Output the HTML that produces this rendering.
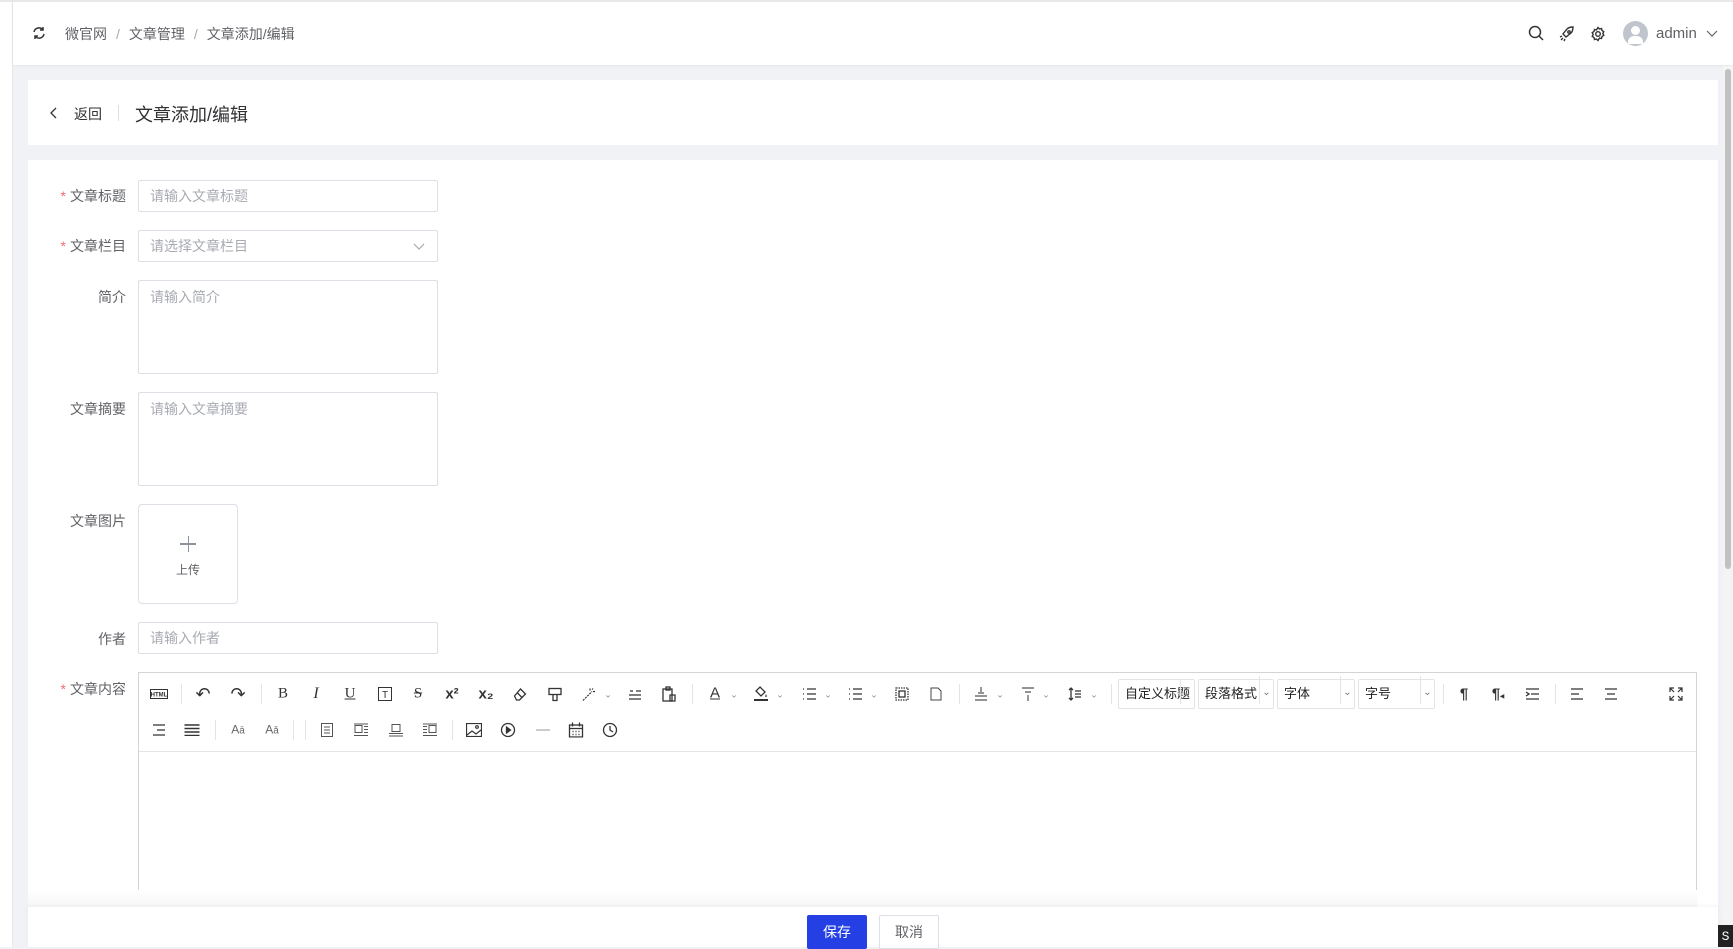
<!DOCTYPE html>
<html><head><meta charset="utf-8"><style>
*{box-sizing:border-box;margin:0;padding:0}
body{width:1733px;height:947px;overflow:hidden;background:#f0f2f5;font-family:"Liberation Sans","Noto Sans CJK SC",sans-serif;color:#303133;position:relative;font-size:14px}
.a{position:absolute}
.hdr{left:13px;top:0;width:1720px;height:65px;background:#fff;border-top:2px solid #e8e8e8;box-shadow:0 1px 3px rgba(0,0,0,.05)}
.lstrip{left:0;top:0;width:13px;height:947px;background:#fff;border-top:2px solid #e8e8e8;border-right:1px solid #e6e6e6}
.card{background:#fff;left:28px;width:1690px}
.lbl{width:100px;text-align:right;font-size:14px;color:#606266;left:26px}
.lbl i{color:#f56c6c;font-style:normal;margin-right:4px}
.inp{left:138px;width:300px;height:32px;border:1px solid #dcdfe6;border-radius:2px;background:#fff;color:#a8abb2;font-size:14px;padding-left:11px;line-height:30px}
.ta{line-height:20px;padding-top:6px}
.ic{transform:translate(-50%,-50%);color:#333;font-size:15px;line-height:1;white-space:nowrap}
.ic svg{display:block}
.car{transform:translate(-50%,-50%);font-size:9px;color:#888}
.sep{width:1px;height:20px;background:#e4e4e4}
.sel{height:30px;top:679px;border:1px solid #e4e4e4;border-radius:2px;font-size:13px;color:#222;line-height:28px;padding-left:6px}
.sel:after{content:"⌄";position:absolute;right:0;top:-4px;width:13px;border-left:1px solid #e4e4e4;height:28px;font-size:10px;text-align:center;color:#777;line-height:34px}
</style></head><body>
<div class="a lstrip"></div>
<div class="a hdr">
 <svg class="a" style="left:19px;top:24px" width="14" height="14" viewBox="0 0 14 14" fill="none" stroke="#333" stroke-width="1.5"><path d="M2 6a5 5 0 0 1 9-2M12 8a5 5 0 0 1-9 2"/><path d="M11 1v3H8M3 13v-3h3"/></svg>
 <div class="a" style="left:52px;top:22px;font-size:14px;color:#606266">微官网<span style="color:#aaa;margin:0 9px">/</span>文章管理<span style="color:#aaa;margin:0 9px">/</span>文章添加/编辑</div>
 <svg class="a" style="left:1515px;top:23px" width="16" height="16" viewBox="0 0 16 16" fill="none" stroke="#333" stroke-width="1.5"><circle cx="7" cy="7" r="5.5"/><path d="M11 11l4 4"/></svg>
 <svg class="a" style="left:1546px;top:24px" width="16" height="16" viewBox="0 0 16 16" fill="none" stroke="#333" stroke-width="1.4"><path d="M6 10l-2-2 4-5c2-2 5-2 6-2 0 1 0 4-2 6l-5 4z"/><circle cx="10" cy="6" r="1.2"/><path d="M4 12l-2 2M6 13l-1 2M3 10l-2 1"/></svg>
 <svg class="a" style="left:1577px;top:24px" width="16" height="16" viewBox="0 0 16 16" fill="none" stroke="#333" stroke-width="1.4"><circle cx="8" cy="8" r="2.3"/><path d="M8 1.5l1.5 1.5 2-.5.5 2 1.8 1.2-1 1.8 1 1.8-1.8 1.2-.5 2-2-.5L8 14.5 6.5 13l-2 .5-.5-2L2.2 10.3l1-1.8-1-1.8L4 5.5l.5-2 2 .5z"/></svg>
 <div class="a" style="left:1610px;top:19px;width:25px;height:25px;border-radius:50%;background:#c0c4cc;overflow:hidden"><div class="a" style="left:8px;top:5px;width:9px;height:9px;border-radius:50%;background:#fff"></div><div class="a" style="left:5px;top:15px;width:15px;height:8px;border-radius:6px 6px 0 0;background:#fff"></div></div>
 <div class="a" style="left:1643px;top:23px;font-size:15px;color:#606266">admin</div>
 <svg class="a" style="left:1693px;top:28px" width="12" height="8" viewBox="0 0 12 8" fill="none" stroke="#666" stroke-width="1.2"><path d="M1 1l5 5 5-5"/></svg>
</div>
<div class="a" style="left:1723px;top:66px;width:10px;height:881px;background:#f4f4f4"></div>
<div class="a" style="left:1725px;top:69px;width:6px;height:500px;background:#c1c1c1;border-radius:3px"></div>

<div class="a card" style="top:80px;height:65px">
 <svg class="a" style="left:22px;top:27px" width="8" height="12" viewBox="0 0 8 12" fill="none" stroke="#333" stroke-width="1.3"><path d="M6 1L1 6l5 5"/></svg>
 <div class="a" style="left:46px;top:24px;font-size:14px;color:#303133">返回</div>
 <div class="a" style="left:90px;top:25px;width:1px;height:16px;background:#dcdfe6"></div>
 <div class="a" style="left:107px;top:21px;font-size:18px;color:#303133">文章添加/编辑</div>
</div>
<div class="a card" style="top:160px;height:787px"></div>

<div class="a lbl" style="top:186px"><i>*</i>文章标题</div>
<div class="a inp" style="top:180px">请输入文章标题</div>
<div class="a lbl" style="top:236px"><i>*</i>文章栏目</div>
<div class="a inp" style="top:230px">请选择文章栏目<svg class="a" style="right:12px;top:12px" width="12" height="7" viewBox="0 0 12 7" fill="none" stroke="#aaa" stroke-width="1.2"><path d="M1 1l5 5 5-5"/></svg></div>
<div class="a lbl" style="top:287px">简介</div>
<div class="a inp ta" style="top:280px;height:94px">请输入简介</div>
<div class="a lbl" style="top:399px">文章摘要</div>
<div class="a inp ta" style="top:392px;height:94px">请输入文章摘要</div>
<div class="a lbl" style="top:511px">文章图片</div>
<div class="a" style="left:138px;top:504px;width:100px;height:100px;border:1px solid #dcdfe6;border-radius:4px;background:#fff">
 <div class="a" style="left:41px;top:38px;width:16px;height:1.5px;background:#8c939d"></div>
 <div class="a" style="left:48.5px;top:31px;width:1.5px;height:16px;background:#8c939d"></div>
 <div class="a" style="left:0;width:98px;top:56px;text-align:center;font-size:12px;color:#606266">上传</div>
</div>
<div class="a lbl" style="top:629px">作者</div>
<div class="a inp" style="top:622px">请输入作者</div>
<div class="a lbl" style="top:679px"><i>*</i>文章内容</div>

<div class="a" style="left:138px;top:672px;width:1559px;height:275px;border:1px solid #d4d4d4;background:#fff"></div>
<div class="a" style="left:139px;top:751px;width:1557px;height:1px;background:#e4e4e4"></div>

<div class="a ic" style="left:159px;top:694px"><svg width="18" height="10"><rect x=".5" y=".5" width="17" height="9" fill="none" stroke="#333"/><text x="9" y="7.5" font-size="6" text-anchor="middle" font-family="Liberation Sans" font-weight="bold" fill="#333">HTML</text></svg></div>
<div class="a sep" style="left:181px;top:684px"></div>
<div class="a ic" style="left:203px;top:694px;font-size:18px">↶</div>
<div class="a ic" style="left:238px;top:694px;font-size:18px">↷</div>
<div class="a sep" style="left:261px;top:684px"></div>
<div class="a ic" style="left:283px;top:694px;font-family:'Liberation Serif'">B</div>
<div class="a ic" style="left:316px;top:694px;font-family:'Liberation Serif';font-style:italic;font-size:16px">I</div>
<div class="a ic" style="left:350px;top:694px;text-decoration:underline;font-family:'Liberation Serif'">U</div>
<div class="a ic" style="left:385px;top:694px"><svg width="14" height="14"><rect x=".5" y=".5" width="13" height="13" fill="none" stroke="#333"/><text x="7" y="11" font-size="10" text-anchor="middle" fill="#333">T</text></svg></div>
<div class="a ic" style="left:418px;top:694px;text-decoration:line-through;font-family:'Liberation Serif'">S</div>
<div class="a ic" style="left:452px;top:694px;font-weight:bold">x²</div>
<div class="a ic" style="left:486px;top:694px;font-weight:bold">x₂</div>
<div class="a ic" style="left:520px;top:694px"><svg width="15" height="14" fill="none" stroke="#333" stroke-width="1.3"><path d="M2 9l6-7 5 5-6 6H4zM5 6l5 5"/></svg></div>
<div class="a ic" style="left:555px;top:694px"><svg width="14" height="15" fill="none" stroke="#333" stroke-width="1.3"><rect x="1" y="2" width="12" height="6"/><path d="M5 8v6h4V8"/></svg></div>
<div class="a ic" style="left:588px;top:694px"><svg width="14" height="15" fill="none" stroke="#333" stroke-width="1.2"><path d="M2 14l9-9M9 2v2M12 5h2M12 2l-1 1" stroke-dasharray="2 1"/></svg></div>
<div class="a car" style="left:608px;top:695px">⌄</div>
<div class="a ic" style="left:635px;top:694px"><svg width="14" height="12" fill="none" stroke="#333" stroke-width="1.3"><path d="M1 7h12M1 11h12M8 3h5M2 3h3"/></svg></div>
<div class="a ic" style="left:669px;top:694px"><svg width="14" height="16" fill="none" stroke="#333" stroke-width="1.3"><rect x="1" y="3" width="9" height="12"/><rect x="4" y="1" width="4" height="3"/><path d="M8 9h5v6H8z"/></svg></div>
<div class="a sep" style="left:692px;top:684px"></div>
<div class="a ic" style="left:715px;top:693px;text-decoration:underline">A</div>
<div class="a car" style="left:734px;top:695px">⌄</div>
<div class="a ic" style="left:761px;top:694px"><svg width="14" height="16" fill="#333"><path d="M6 1l5 5-4 4-5-5z" fill="none" stroke="#333" stroke-width="1.3"/><path d="M12 8c1 2 1 3 0 3s-1-1 0-3z"/><rect x="0" y="13" width="14" height="2"/></svg></div>
<div class="a car" style="left:780px;top:695px">⌄</div>
<div class="a ic" style="left:809px;top:694px"><svg width="14" height="12" fill="none" stroke="#333" stroke-width="1.3"><path d="M5 1h9M5 6h9M5 11h9M1 1h1M1 6h1M1 11h1"/></svg></div>
<div class="a car" style="left:828px;top:695px">⌄</div>
<div class="a ic" style="left:855px;top:694px"><svg width="14" height="12" fill="none" stroke="#333" stroke-width="1.3"><path d="M5 1h9M5 6h9M5 11h9M1 1h1M1 6h1M1 11h1"/></svg></div>
<div class="a car" style="left:874px;top:695px">⌄</div>
<div class="a ic" style="left:902px;top:694px"><svg width="14" height="14" fill="none" stroke="#333" stroke-width="1.3"><rect x="1" y="1" width="12" height="12" stroke-dasharray="1.5 1"/><rect x="4" y="4" width="6" height="6"/></svg></div>
<div class="a ic" style="left:936px;top:694px"><svg width="12" height="14" fill="none" stroke="#444" stroke-width="1"><path d="M1 1h7l3 3v9H1z"/></svg></div>
<div class="a sep" style="left:959px;top:684px"></div>
<div class="a ic" style="left:981px;top:694px"><svg width="14" height="14" fill="none" stroke="#555" stroke-width="1.2"><path d="M7 0v5M1 9h12M1 13h12M4 6h6"/></svg></div>
<div class="a car" style="left:1000px;top:695px">⌄</div>
<div class="a ic" style="left:1028px;top:694px"><svg width="14" height="14" fill="none" stroke="#555" stroke-width="1.2"><path d="M1 1h12M4 5h6M7 8v6"/></svg></div>
<div class="a car" style="left:1046px;top:695px">⌄</div>
<div class="a ic" style="left:1075px;top:694px"><svg width="14" height="14" fill="none" stroke="#333" stroke-width="1.3"><path d="M3 1v12M1 3l2-2 2 2M1 11l2 2 2-2M7 4h6M7 7h6M7 10h6"/></svg></div>
<div class="a car" style="left:1094px;top:695px">⌄</div>
<div class="a sep" style="left:1111px;top:684px"></div>
<div class="a sel" style="left:1118px;width:77px;overflow:hidden">自定义标题</div>
<div class="a sel" style="left:1198px;width:76px">段落格式</div>
<div class="a sel" style="left:1277px;width:78px">字体</div>
<div class="a sel" style="left:1358px;width:77px">字号</div>
<div class="a sep" style="left:1443px;top:684px"></div>
<div class="a ic" style="left:1464px;top:694px;font-weight:bold">¶</div>
<div class="a ic" style="left:1498px;top:694px;font-weight:bold">¶<span style="font-size:8px">◂</span></div>
<div class="a ic" style="left:1532px;top:694px"><svg width="14" height="12" fill="none" stroke="#333" stroke-width="1.3"><path d="M1 1h13M6 6h8M1 11h13M1 4l3 2-3 2"/></svg></div>
<div class="a sep" style="left:1555px;top:684px"></div>
<div class="a ic" style="left:1577px;top:694px"><svg width="14" height="12" fill="none" stroke="#333" stroke-width="1.3"><path d="M1 1h12M1 6h8M1 11h12"/></svg></div>
<div class="a ic" style="left:1611px;top:694px"><svg width="14" height="12" fill="none" stroke="#333" stroke-width="1.3"><path d="M1 1h12M3 6h8M1 11h12"/></svg></div>
<div class="a ic" style="left:1676px;top:694px"><svg width="14" height="14" fill="none" stroke="#333" stroke-width="1.2"><path d="M1 5V1h4M9 1h4v4M13 9v4H9M5 13H1V9M1 1l4 4M13 1L9 5M13 13L9 9M1 13l4-4"/></svg></div>

<div class="a ic" style="left:159px;top:730px"><svg width="14" height="12" fill="none" stroke="#333" stroke-width="1.3"><path d="M1 1h12M5 6h8M1 11h12"/></svg></div>
<div class="a ic" style="left:192px;top:730px"><svg width="15" height="12" fill="none" stroke="#333" stroke-width="1.6"><path d="M0 1h15M0 4.5h15M0 8h15M0 11.5h15"/></svg></div>
<div class="a sep" style="left:215px;top:720px"></div>
<div class="a ic" style="left:238px;top:730px;font-size:12px;color:#666">A<span style="font-size:10px">ā</span></div>
<div class="a ic" style="left:272px;top:730px;font-size:12px;color:#666">A<span style="font-size:10px">ǎ</span></div>
<div class="a sep" style="left:293px;top:720px"></div>
<div class="a sep" style="left:305px;top:720px"></div>
<div class="a ic" style="left:327px;top:730px"><svg width="12" height="14" fill="none" stroke="#555" stroke-width="1"><rect x=".5" y=".5" width="11" height="13"/><path d="M3 4h6M3 7h6M3 10h6"/></svg></div>
<div class="a ic" style="left:361px;top:730px"><svg width="14" height="13" fill="none" stroke="#555" stroke-width="1"><rect x="1" y="2" width="7" height="7"/><path d="M10 3h4M10 6h4M10 9h4M0 12h14M0 .5h14"/></svg></div>
<div class="a ic" style="left:396px;top:730px"><svg width="14" height="13" fill="none" stroke="#555" stroke-width="1"><rect x="3" y="1" width="8" height="7"/><path d="M0 10h14M0 12.5h14"/></svg></div>
<div class="a ic" style="left:430px;top:730px"><svg width="14" height="13" fill="none" stroke="#555" stroke-width="1"><rect x="6" y="2" width="7" height="7"/><path d="M0 3h4M0 6h4M0 9h4M0 12h14M0 .5h14"/></svg></div>
<div class="a sep" style="left:452px;top:720px"></div>
<div class="a ic" style="left:474px;top:730px"><svg width="16" height="14" fill="none" stroke="#333" stroke-width="1.2"><rect x=".5" y=".5" width="15" height="13"/><path d="M1 12l5-4 4 3 5-4"/><circle cx="11" cy="4" r="1.3"/></svg></div>
<div class="a ic" style="left:508px;top:730px"><svg width="15" height="15" fill="none" stroke="#333" stroke-width="1.3"><circle cx="7.5" cy="7.5" r="6.5"/><path d="M6 4.5l4 3-4 3z" fill="#333"/></svg></div>
<div class="a" style="left:536px;top:729px;width:14px;height:2px;background:#ccc"></div>
<div class="a ic" style="left:576px;top:730px"><svg width="15" height="15" fill="none" stroke="#333" stroke-width="1.3"><rect x="1" y="2.5" width="13" height="12"/><path d="M1 6h13M4 0v4M11 0v4"/><path d="M4 9h1M7 9h1M10 9h1M4 12h1M7 12h1M10 12h1" stroke-width="1.5"/></svg></div>
<div class="a ic" style="left:610px;top:730px"><svg width="15" height="15" fill="none" stroke="#333" stroke-width="1.3"><circle cx="7.5" cy="7.5" r="6.5"/><path d="M7.5 3.5v4l3 2"/></svg></div>

<div class="a" style="left:28px;top:890px;width:1669px;height:17px;background:linear-gradient(#fff,#f6f6f6)"></div>
<div class="a" style="left:28px;top:907px;width:1690px;height:40px;background:#fff;box-shadow:0 -1px 4px rgba(0,0,0,.05)"></div>
<div class="a" style="left:807px;top:915px;width:60px;height:34px;background:#2440e4;border-radius:2px;color:#fff;text-align:center;line-height:34px;font-size:14px">保存</div>
<div class="a" style="left:879px;top:915px;width:60px;height:34px;background:#fff;border:1px solid #dcdfe6;border-radius:2px;color:#606266;text-align:center;line-height:32px;font-size:14px">取消</div>
<div class="a" style="left:1718px;top:925px;width:15px;height:22px;background:#222;color:#fff;font-size:13px;text-align:center;line-height:24px;font-family:'Liberation Mono'">S</div>
</body></html>
